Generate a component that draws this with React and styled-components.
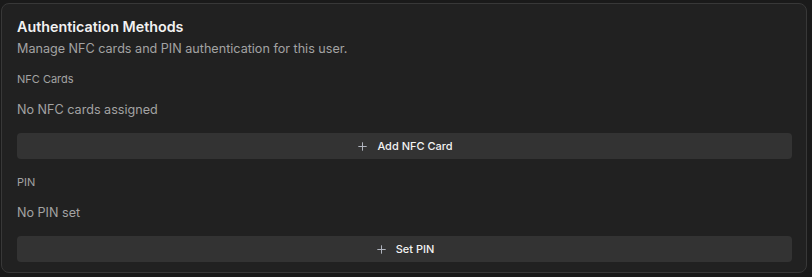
import React from "react";
import styled, { createGlobalStyle } from "styled-components";
import { Plus } from "lucide-react";

const GlobalStyle = createGlobalStyle`
  html, body {
    margin: 0;
    background: #1a1a1a;
    font-family: Inter, "Noto Sans", sans-serif;
    -webkit-font-smoothing: antialiased;
  }
`;

// 페이지 래퍼
const Page = styled.div`
  padding: 3px 5px 3px 1px;
`;

// 카드 컨테이너
const Card = styled.section`
  background: #212121;
  border: 1px solid #383838;
  border-radius: 8px;
  padding: 12px 14px 10px 15px;
  display: flex;
  flex-direction: column;
`;

const Title = styled.h2`
  margin: 0;
  font-size: 14.3px;
  font-weight: 600;
  color: #f2f2f2;
  line-height: 22px;
`;

const Subtitle = styled.p`
  margin: 0 0 11px;
  font-size: 12.6px;
  color: #a3a3a3;
  line-height: 22px;
`;

const Section = styled.div`
  display: flex;
  flex-direction: column;
  margin-bottom: ${({ $last }) => ($last ? "0" : "15px")};
`;

const Label = styled.div`
  font-size: 11px;
  color: #a3a3a3;
  line-height: 16px;
`;

const Empty = styled.div`
  font-size: 12.6px;
  color: #a3a3a3;
  line-height: 18px;
  margin: 14px 0 14px;
`;

// 추가 버튼
const ActionButton = styled.button`
  display: flex;
  align-items: center;
  justify-content: center;
  gap: 8px;
  height: 26px;
  width: 100%;
  border: none;
  border-radius: 4px;
  background: #333333;
  color: #f2f2f2;
  font-family: inherit;
  font-size: 11px;
  font-weight: 500;
  cursor: pointer;

  svg {
    color: #b4b8c2;
  }
`;

const sections = [
  { label: "NFC Cards", empty: "No NFC cards assigned", action: "Add NFC Card" },
  { label: "PIN", empty: "No PIN set", action: "Set PIN" },
];

export default function App() {
  return (
    <Page>
      <GlobalStyle />
      <Card>
        <Title>Authentication Methods</Title>
        <Subtitle>Manage NFC cards and PIN authentication for this user.</Subtitle>
        {sections.map((s, i) => (
          <Section key={s.label} $last={i === sections.length - 1}>
            <Label>{s.label}</Label>
            <Empty>{s.empty}</Empty>
            <ActionButton>
              <Plus size={13} strokeWidth={1.8} />
              {s.action}
            </ActionButton>
          </Section>
        ))}
      </Card>
    </Page>
  );
}
